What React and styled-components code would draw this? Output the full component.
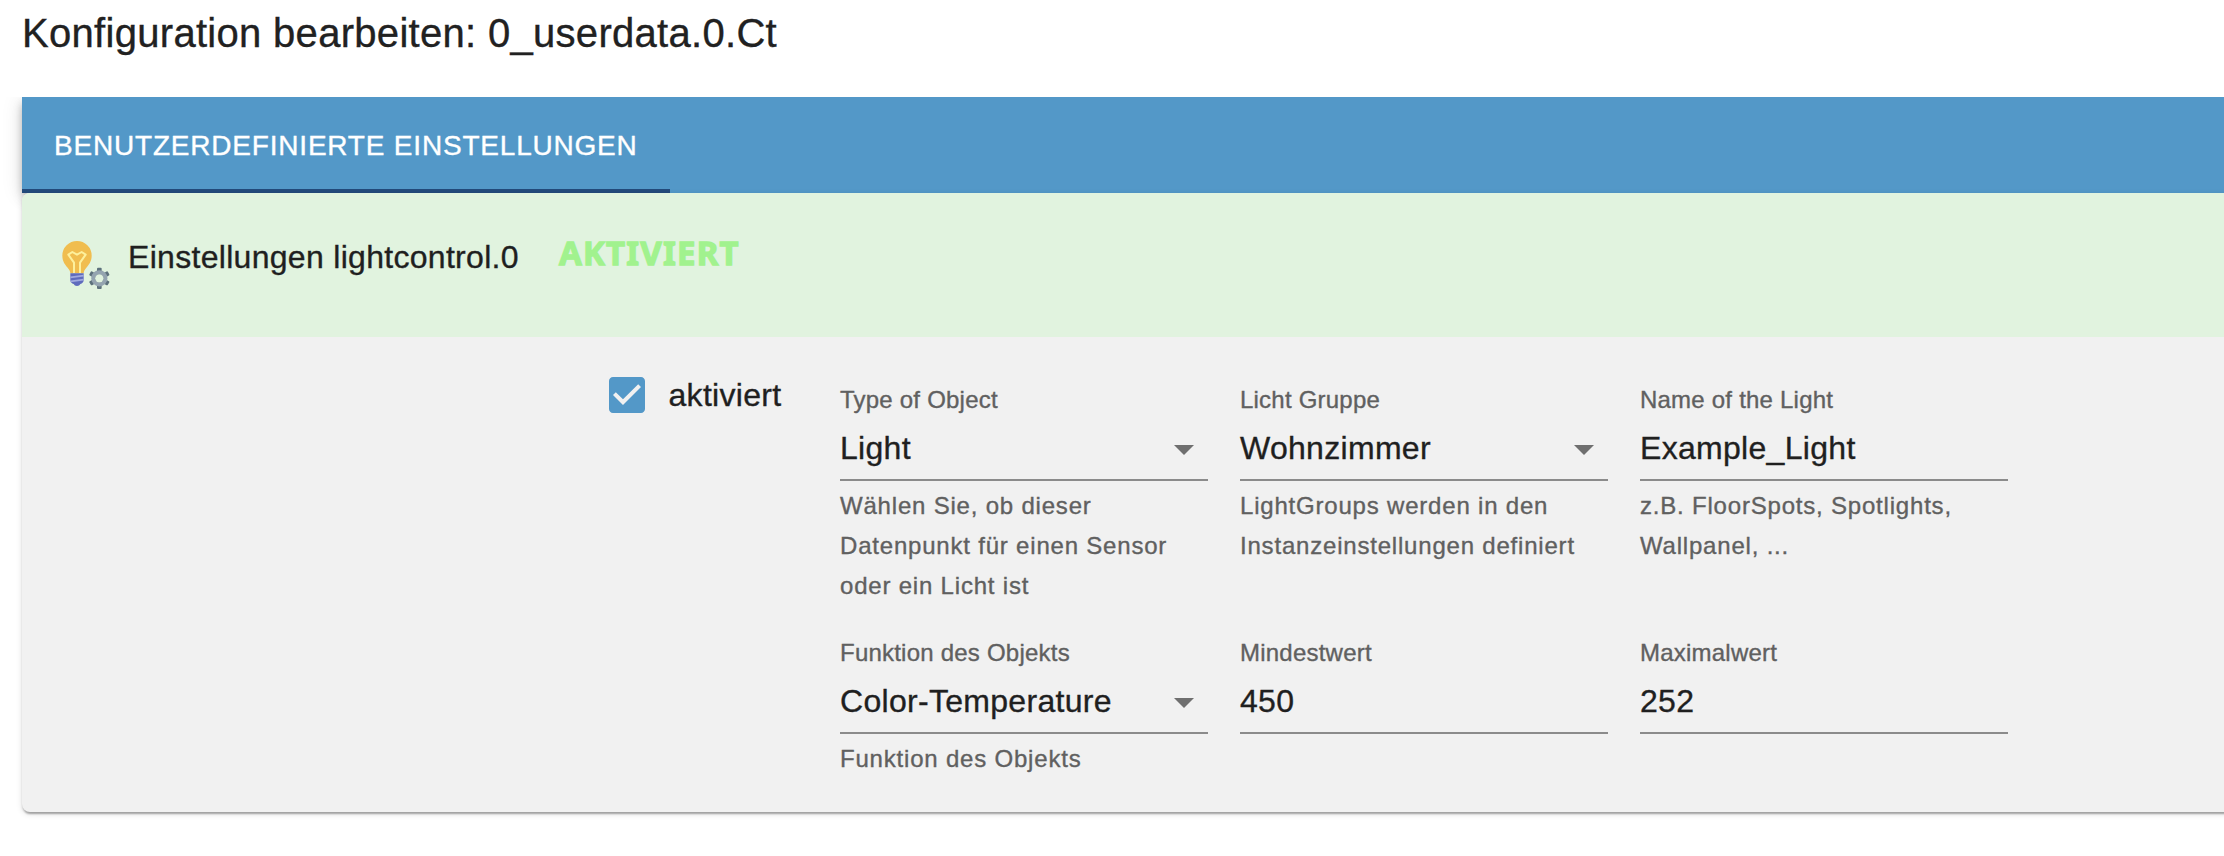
import React from "react";
import styled, { createGlobalStyle } from "styled-components";

const GlobalStyle = createGlobalStyle`
  * { box-sizing: border-box; }
  body {
    margin: 0;
    background: #fff;
    color: #1f1f1f;
    font-family: "Liberation Sans", Helvetica, Arial, sans-serif;
    -webkit-text-stroke: 0.35px currentColor;
    overflow: hidden;
  }
`;

const Page = styled.main`
  width: 100%;
  height: 856px;
  padding-left: 22px;
  overflow: hidden;
`;

const Title = styled.h1`
  margin: 0;
  height: 97px;
  padding-top: 1px;
  font-size: 40px;
  font-weight: 400;
  line-height: 64px;
  letter-spacing: 0.3px;
  white-space: nowrap;
  color: #212121;
`;

const TabBar = styled.nav`
  display: flex;
  height: 96px;
  background: #5398c8;
  box-shadow:
    0 4px 8px -2px rgba(0, 0, 0, 0.2),
    0 8px 10px rgba(0, 0, 0, 0.14),
    0 2px 20px rgba(0, 0, 0, 0.12);
  clip-path: inset(0 0 -40px -22px);
`;

const Tab = styled.button`
  width: 648px;
  padding: 4px 0 0 32px;
  border: 0;
  border-bottom: 4px solid #234a7b;
  background: none;
  color: #fff;
  font: 400 28px/35px "Liberation Sans", Helvetica, Arial, sans-serif;
  letter-spacing: 0.8px;
  text-align: left;
  text-transform: uppercase;
  white-space: nowrap;
`;

const Panel = styled.section`
  position: relative;
  height: 619px;
  margin-right: -10px;
  border-radius: 8px 0 0 8px;
  background: #f1f1f1;
  box-shadow:
    0 4px 2px -2px rgba(0, 0, 0, 0.2),
    0 2px 2px rgba(0, 0, 0, 0.14),
    0 2px 6px rgba(0, 0, 0, 0.12);
`;

const PanelHeader = styled.header`
  display: flex;
  align-items: flex-start;
  height: 144px;
  padding: 47px 0 0 38px;
  border-radius: 8px 0 0 0;
  background: #e1f3df;
`;

const AdapterIcon = styled.svg`
  flex: none;
  width: 51px;
  height: 50px;
`;

const Heading = styled.h2`
  margin: -2px 0 0 17px;
  font-size: 32px;
  font-weight: 400;
  line-height: 38px;
  letter-spacing: 0.3px;
  white-space: nowrap;
`;

const Status = styled.span`
  margin: -6px 0 0 40px;
  color: #a1f28e;
  font: 700 33px/38px "Noto Sans", sans-serif;
  letter-spacing: 1.2px;
  -webkit-text-stroke: 1.3px currentColor;
`;

const Content = styled.div`
  display: flex;
  padding: 34px 0 0 581px;
`;

const CheckLabel = styled.label`
  display: flex;
  align-items: center;
  width: 237px;
  height: 48px;
  font-size: 32px;
  letter-spacing: 0.3px;
  svg { width: 48px; height: 48px; margin-right: 17.5px; }
`;

const Fields = styled.div`
  display: grid;
  grid-template-columns: repeat(3, 368px);
  grid-template-rows: 253px auto;
  column-gap: 32px;
  padding-top: 17px;
`;

const Field = styled.div`
  display: flex;
  flex-direction: column;
`;

const FieldLabel = styled.span`
  font-size: 24px;
  line-height: 24px;
  letter-spacing: 0.22px;
  color: #606060;
  white-space: nowrap;
`;

const Value = styled.div`
  display: flex;
  justify-content: space-between;
  height: 69px;
  padding-top: 17px;
  border-bottom: 2px solid #8b8b8b;
  font-size: 32px;
  line-height: 38px;
  letter-spacing: 0.3px;
  white-space: nowrap;
  svg { width: 48px; height: 48px; margin-top: -4px; }
`;

const Helper = styled.p`
  margin: 5px 0 0;
  font-size: 24px;
  line-height: 40px;
  letter-spacing: 0.8px;
  color: #606060;
  white-space: pre-line;
`;

const fields = [
  { label: "Type of Object", value: "Light", select: true, helper: "Wählen Sie, ob dieser\nDatenpunkt für einen Sensor\noder ein Licht ist" },
  { label: "Licht Gruppe", value: "Wohnzimmer", select: true, helper: "LightGroups werden in den\nInstanzeinstellungen definiert" },
  { label: "Name of the Light", value: "Example_Light", helper: "z.B. FloorSpots, Spotlights,\nWallpanel, ..." },
  { label: "Funktion des Objekts", value: "Color-Temperature", select: true, helper: "Funktion des Objekts" },
  { label: "Mindestwert", value: "450" },
  { label: "Maximalwert", value: "252" },
];

const BulbGear = () => (
  <AdapterIcon viewBox="60 45 153 150">
    <path d="M111 48a44 44 0 0 0-44 44c0 17 9 28 16 36 5 6 8 11 8 17h40c0-6 3-11 8-17 7-8 16-19 16-36a44 44 0 0 0-44-44z" fill="#f0bd4f" />
    <path d="M102 144v-31L85 89l12-8 14 8 14-8 12 8-17 24v31" fill="none" stroke="#fdf09c" strokeWidth="6" strokeLinejoin="round" />
    <path d="M91 145h40v20c0 6-4 11-10 12-2 4-5 6-10 6s-8-2-10-6c-6-1-10-6-10-12z" fill="#5f6bbd" />
    <path d="M91 157l40-5M92 169l39-5" stroke="#a0a9df" strokeWidth="5" />
    <g fill="#5d717c">
      {[0, 60, 120].map((angle) => (
        <rect key={angle} x="171" y="128" width="14" height="64" rx="3" transform={`rotate(${angle} 178 160)`} />
      ))}
    </g>
    <circle cx="178" cy="160" r="18.5" fill="none" stroke="#94a4b0" strokeWidth="12" />
    <circle cx="178" cy="160" r="12.5" fill="#e1f3df" />
  </AdapterIcon>
);

export default function App() {
  return (
    <>
      <GlobalStyle />
      <Page>
        <Title>Konfiguration bearbeiten: 0_userdata.0.Ct</Title>
        <TabBar>
          <Tab>Benutzerdefinierte Einstellungen</Tab>
        </TabBar>
        <Panel>
          <PanelHeader>
            <BulbGear />
            <Heading>Einstellungen lightcontrol.0</Heading>
            <Status>AKTIVIERT</Status>
          </PanelHeader>
          <Content>
            <CheckLabel>
              <svg viewBox="0 0 24 24" fill="#5398c8">
                <path d="M19 3H5c-1.11 0-2 .9-2 2v14c0 1.1.89 2 2 2h14c1.11 0 2-.9 2-2V5c0-1.1-.89-2-2-2zm-9 14l-5-5 1.41-1.41L10 14.17l7.59-7.59L19 8l-9 9z" />
              </svg>
              aktiviert
            </CheckLabel>
            <Fields>
              {fields.map(({ label, value, select, helper }) => (
                <Field key={label}>
                  <FieldLabel>{label}</FieldLabel>
                  <Value>
                    {value}
                    {select && (
                      <svg viewBox="0 0 24 24" fill="#6f6f6f">
                        <path d="M7 10l5 5 5-5z" />
                      </svg>
                    )}
                  </Value>
                  {helper && <Helper>{helper}</Helper>}
                </Field>
              ))}
            </Fields>
          </Content>
        </Panel>
      </Page>
    </>
  );
}
